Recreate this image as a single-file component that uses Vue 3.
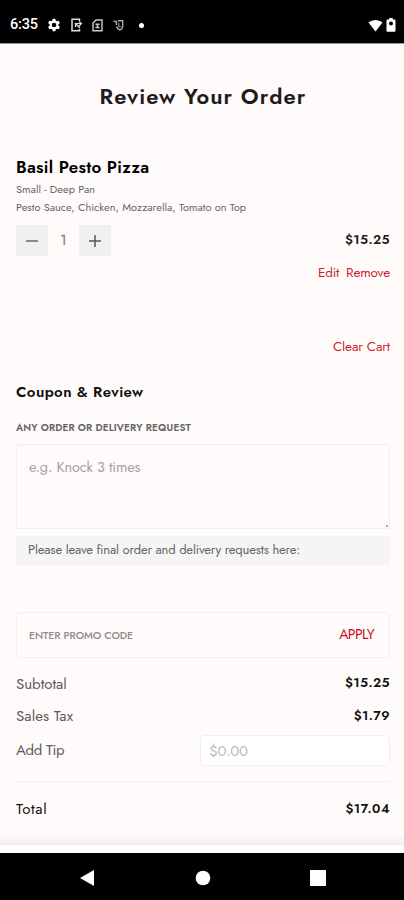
<script setup>
import { ref } from 'vue'

const quantity = ref(1)
const request = ref('')
const promo = ref('')
const tip = ref('')
</script>

<template>
  <div class="phone">
    <header class="status">
      <span class="clock">6:35</span>
      <svg class="gear" width="14" height="14" viewBox="0 0 14 14">
        <path d="M5.700 .8h2.600l.4 1.800 1.100.7 1.800-.6 1.300 2.300-1.400 1.300v1.400l1.400 1.300-1.300 2.300-1.800-.6-1.100.7-.4 1.800H5.700l-.4-1.800-1.100-.7-1.800.6L1.100 9l1.400-1.300V6.300L1.100 5l1.300-2.300 1.800.6 1.100-.7z" fill="#fff" />
        <circle cx="7" cy="7" r="2.300" fill="#000" />
      </svg>
      <svg class="cast" width="13" height="14" viewBox="0 0 13 14" fill="none" stroke="#ddd" stroke-width="1.500">
        <path d="M9.500 3V1.200H2v11.600h7.500V11" />
        <path d="M5.500 9V5.500H11M9 3.500l2.500 2L9 8M5 5l5 5" stroke-width="1.200" />
      </svg>
      <svg class="sim" width="11" height="13" viewBox="0 0 11 13" fill="none" stroke="#ccc" stroke-width="1.400">
        <path d="M4 1h6v10.800H1V4z" />
        <path d="M3.500 5.200h4M3.500 8.500h4M5.500 5v4" />
      </svg>
      <svg class="shield" width="11" height="12" viewBox="0 0 11 12" fill="none" stroke="#aaa" stroke-width="1.400">
        <path d="M.5 2.500h3v3.500M5 1.800h4.700V7c0 2-1 3.300-2.500 3.800C5 10.500 4 9 3.500 7.500" />
        <path d="M5.800 4v3.500h2" stroke="#777" />
      </svg>
      <i class="dot"></i>
      <svg class="wifi" width="15" height="13" viewBox="0 0 15 13">
        <path d="M.5 3.500C4.500 0 10.500 0 14.500 3.500L7.500 12.500z" fill="#fff" />
      </svg>
      <svg class="battery" width="10" height="14" viewBox="0 0 10 14">
        <path d="M3.200 0h3.600v1.500H8.500q1 0 1 1v10.200q0 1-1 1h-7q-1 0-1-1V2.500q0-1 1-1h1.700z" fill="#fff" />
        <circle cx="5" cy="5.600" r="2" fill="#000" />
      </svg>
    </header>

    <main class="page">
      <h1 class="title">Review Your Order</h1>

      <section class="item">
        <h2 class="name">Basil Pesto Pizza</h2>
        <p class="detail">Small - Deep Pan</p>
        <p class="detail toppings">Pesto Sauce, Chicken, Mozzarella, Tomato on Top</p>
        <div class="qty-row">
          <div class="stepper">
            <button class="step" aria-label="Decrease">
              <svg width="14" height="14" viewBox="0 0 14 14"><path d="M1 7h12" stroke="#666" stroke-width="1.500" /></svg>
            </button>
            <span class="qty">{{ quantity }}</span>
            <button class="step" aria-label="Increase">
              <svg width="14" height="14" viewBox="0 0 14 14"><path d="M1 7h12M7 1v12" stroke="#555" stroke-width="1.500" /></svg>
            </button>
          </div>
          <span class="price">$15.25</span>
        </div>
        <div class="links"><a class="edit">Edit</a><a class="remove">Remove</a></div>
      </section>

      <div class="links clear"><a>Clear Cart</a></div>

      <h3 class="heading">Coupon &amp; Review</h3>
      <label class="label">ANY ORDER OR DELIVERY REQUEST</label>
      <div class="area">
        <textarea v-model="request" placeholder="e.g. Knock 3 times"></textarea>
        <i class="grip"></i>
      </div>
      <p class="note">Please leave final order and delivery requests here:</p>

      <div class="promo">
        <input v-model="promo" placeholder="ENTER PROMO CODE" />
        <button class="apply">APPLY</button>
      </div>

      <dl class="totals">
        <div class="line subtotal"><dt>Subtotal</dt><dd>$15.25</dd></div>
        <div class="line tax"><dt>Sales Tax</dt><dd>$1.79</dd></div>
        <div class="line tip">
          <dt>Add Tip</dt>
          <dd><input v-model="tip" placeholder="$0.00" /></dd>
        </div>
        <div class="line total"><dt>Total</dt><dd>$17.04</dd></div>
      </dl>
    </main>

    <div class="sheet"></div>

    <nav class="nav">
      <svg width="16" height="18" viewBox="0 0 16 18"><path d="M15 1v16L1 9z" fill="#fff" /></svg>
      <svg width="16" height="16" viewBox="0 0 16 16"><circle cx="8" cy="8" r="7.300" fill="#fff" /></svg>
      <svg width="16" height="16" viewBox="0 0 16 16"><rect width="16" height="16" rx=".5" fill="#fff" /></svg>
    </nav>
  </div>
</template>

<style>
body {
  background: #fffbfa;
}
</style>

<style scoped>
.phone {
  width: 404px;
  height: 900px;
  display: flex;
  flex-direction: column;
  overflow: hidden;
  background: #fffbfa;
  color: #1c1c1c;
  font-family: Jost, Lato, sans-serif;
}
.phone * {
  box-sizing: border-box;
}
h1, h2, h3, p, dl, dd {
  margin: 0;
}
button, input, textarea {
  margin: 0;
  padding: 0;
  border: 0;
  outline: 0;
  background: none;
  font-family: inherit;
}
.status {
  position: relative;
  flex: none;
  height: 43px;
  padding: 7px 8px 0 10px;
  display: flex;
  align-items: center;
  background: #000;
  box-shadow: 0 1px 0 #999;
  color: #fff;
}
.clock {
  width: 37px;
  font: 500 14.500px/20px Roboto, sans-serif;
  letter-spacing: -0.200px;
}
.gear { margin-right: 9px; }
.cast { margin-right: 9px; }
.sim { margin-right: 10px; }
.shield { margin-right: 15px; }
.dot {
  width: 5px;
  height: 5px;
  border-radius: 50%;
  background: #fff;
}
.wifi { margin-left: auto; }
.battery { margin-left: 3px; }

.page {
  flex: none;
  height: 802px;
  padding: 38px 14px 0 16px;
  background: linear-gradient(#fffbfa 98.700%, #f2efee);
}
.title {
  text-align: center;
  font: 600 22px/30px Jost, Lato, sans-serif;
  letter-spacing: 1.030px;
}
.name {
  margin-top: 44px;
  font: 600 17px/24px Jost, Lato, sans-serif;
  letter-spacing: 0.270px;
  color: #000;
}
.detail {
  margin-top: 1px;
  font-size: 11px;
  line-height: 18px;
  color: #666;
  white-space: nowrap;
}
.toppings { margin-top: 0; }
.qty-row {
  margin-top: 9px;
  height: 31px;
  display: flex;
  align-items: center;
  justify-content: space-between;
}
.stepper {
  display: flex;
  align-items: center;
}
.step {
  width: 32px;
  height: 31px;
  display: flex;
  align-items: center;
  justify-content: center;
  background: #f0f0f0;
}
.qty {
  width: 31px;
  padding-bottom: 2px;
  text-align: center;
  font-size: 15px;
  color: #777;
}
.price {
  padding-bottom: 2px;
  font-size: 13px;
  font-weight: 600;
  letter-spacing: 0.400px;
}
.links {
  margin-top: 6px;
  height: 22px;
  display: flex;
  justify-content: flex-end;
  gap: 7px;
  font-size: 13.500px;
  line-height: 22px;
  color: #c8252b;
}
.edit { letter-spacing: -0.200px; }
.remove { letter-spacing: -0.150px; }
.clear {
  margin-top: 52px;
  letter-spacing: -0.100px;
}
.heading {
  margin-top: 23px;
  font: 600 15px/22px Jost, Lato, sans-serif;
  letter-spacing: 0.400px;
  color: #111;
}
.label {
  display: block;
  margin-top: 17px;
  font-size: 10px;
  font-weight: 600;
  line-height: 16px;
  letter-spacing: 0.100px;
  color: #666;
}
.area {
  position: relative;
  margin-top: 8px;
  height: 85px;
}
.area textarea {
  display: block;
  width: 100%;
  height: 85px;
  padding: 11px 12px;
  resize: none;
  border: 1px solid #f4efee;
  border-radius: 2px;
  font-size: 14.500px;
  line-height: 22px;
  letter-spacing: -0.130px;
}
.grip {
  position: absolute;
  right: 2px;
  bottom: 2px;
  width: 2px;
  height: 2px;
  background: #aaa;
}
::placeholder {
  color: #a3a3a3;
  opacity: 1;
}
.note {
  margin-top: 7px;
  height: 29px;
  padding-left: 12px;
  background: #f5f5f5;
  font-size: 13px;
  line-height: 28px;
  letter-spacing: -0.180px;
  color: #666;
}
.promo {
  margin-top: 47px;
  height: 46px;
  padding: 0 15px 0 12px;
  display: flex;
  align-items: center;
  justify-content: space-between;
  border: 1px solid #f5f0ef;
  border-radius: 4px;
}
.promo input {
  width: 150px;
  padding-top: 1px;
  font-size: 10.500px;
  font-weight: 500;
  letter-spacing: -0.070px;
}
.promo input::placeholder { color: #8c8c8c; }
.apply {
  padding-bottom: 2px;
  font-size: 14px;
  letter-spacing: -0.600px;
  color: #c40d1c;
}
.line {
  display: flex;
  align-items: center;
  justify-content: space-between;
  font-size: 15px;
  line-height: 22px;
  color: #5c5c5c;
}
.line dd {
  font-size: 13px;
  font-weight: 600;
  letter-spacing: 0.400px;
  color: #111;
}
.subtotal { margin-top: 14px; }
.subtotal dd { padding-bottom: 2px; }
.tax { margin-top: 9px; }
.tax dt { letter-spacing: 0.100px; }
.tip {
  margin-top: 8px;
  height: 31px;
}
.tip dt {
  padding-bottom: 1px;
  letter-spacing: -0.400px;
}
.tip input {
  display: block;
  width: 190px;
  height: 31px;
  padding-left: 8px;
  border: 1px solid #f2eeee;
  border-radius: 5px;
  background: #fff;
  font-size: 15px;
  letter-spacing: -0.300px;
}
.tip input::placeholder { color: #bbb; }
.total {
  margin-top: 15px;
  padding-top: 16px;
  border-top: 1px solid #f3efee;
}
.total dt {
  color: #111;
  letter-spacing: 0.700px;
}
.total dd { letter-spacing: 0.500px; }
.sheet {
  flex: none;
  height: 8px;
  background: #fff;
}
.nav {
  flex: none;
  height: 47px;
  padding: 2px 78px 0 79px;
  display: flex;
  align-items: center;
  justify-content: space-between;
  background: #000;
}
</style>
